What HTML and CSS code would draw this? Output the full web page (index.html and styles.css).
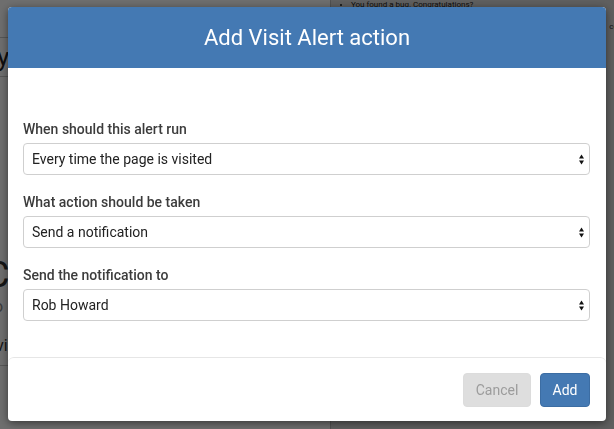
FILE: index.html
```html
<!DOCTYPE html>
<html>
<head>
<meta charset="utf-8">
<link rel="stylesheet" href="styles.css">
</head>
<body>
<div class="page">
  <div class="main">
    <div class="topbar"></div>
    <div class="heading">ry</div>
    <div class="spacer"></div>
    <div class="big">C</div>
    <div class="sub">o</div>
    <div class="line">vis</div>
  </div>
  <div class="side">
    <ul class="notes"><li>You found a bug. Congratulations?</li></ul>
    <div class="sidelink">co</div>
  </div>
</div>
<div class="overlay">
  <div class="modal">
    <div class="modal-header">Add Visit Alert action</div>
    <div class="modal-body">
      <div class="field">
        <label class="field-label">When should this alert run</label>
        <div class="select"><span>Every time the page is visited</span><svg class="arrows" width="5" height="11" viewBox="0 0 5 11"><path d="M2.5 0.5 L5 4.5 L0 4.5 Z M0 6.5 L5 6.5 L2.5 10.5 Z" fill="#111"/></svg></div>
      </div>
      <div class="field">
        <label class="field-label">What action should be taken</label>
        <div class="select"><span>Send a notification</span><svg class="arrows" width="5" height="11" viewBox="0 0 5 11"><path d="M2.5 0.5 L5 4.5 L0 4.5 Z M0 6.5 L5 6.5 L2.5 10.5 Z" fill="#111"/></svg></div>
      </div>
      <div class="field">
        <label class="field-label">Send the notification to</label>
        <div class="select"><span>Rob Howard</span><svg class="arrows" width="5" height="11" viewBox="0 0 5 11"><path d="M2.5 0.5 L5 4.5 L0 4.5 Z M0 6.5 L5 6.5 L2.5 10.5 Z" fill="#111"/></svg></div>
      </div>
    </div>
    <div class="modal-footer">
      <button class="btn btn-cancel">Cancel</button>
      <button class="btn btn-add">Add</button>
    </div>
  </div>
</div>
</body>
</html>
```

FILE: styles.css
```css
* { box-sizing: border-box; }
html, body { margin: 0; padding: 0; }
body {
  width: 614px;
  height: 429px;
  overflow: hidden;
  font-family: Roboto, "Liberation Sans", sans-serif;
  position: relative;
  background: #fff;
}
.page {
  display: flex;
  height: 429px;
}
.main {
  width: 330px;
  background: #fff;
  display: flex;
  flex-direction: column;
}
.topbar { height: 38px; border-bottom: 1px solid #c8c8c8; }
.heading {
  height: 39px;
  font-size: 26px;
  line-height: 39px;
  color: #222;
  border-bottom: 1px solid #c8c8c8;
  white-space: nowrap;
  margin-left: -12px;
}
.spacer { height: 178px; }
.big { font-size: 36px; color: #333; line-height: 40px; margin-left: -14px; }
.sub { font-size: 16px; color: #888; margin-left: -6px; margin-top: 2px; }
.line {
  margin-top: 20px;
  font-size: 16px;
  color: #333;
  padding-bottom: 10px;
  border-bottom: 1px solid #c8c8c8;
  margin-left: -4px;
}
.side {
  flex: 1;
  background: #dcdcdc;
  border-left: 1px solid #bbb;
  font-size: 8px;
  color: #222;
}
.notes { margin: 0; padding: 0 0 0 20px; line-height: 10px; }
.sidelink { text-align: right; margin-top: 12px; font-size: 8px; color: #333; margin-right: -4px; }
.overlay {
  position: fixed;
  inset: 0;
  background: rgba(0, 0, 0, 0.57);
  padding: 7px 8px 0 8px;
}
.modal {
  width: 598px;
  height: 414px;
  background: #fff;
  border-radius: 4px;
  box-shadow: 0 2px 8px rgba(0, 0, 0, 0.5);
  display: flex;
  flex-direction: column;
  overflow: hidden;
}
.modal-header {
  height: 61px;
  background: #4479b3;
  color: #fff;
  font-size: 22px;
  display: flex;
  align-items: center;
  justify-content: center;
  border-radius: 3px 3px 0 0;
}
.modal-body {
  flex: 1;
  padding: 51px 16px 0 15px;
  display: flex;
  flex-direction: column;
  gap: 17px;
}
.field { display: flex; flex-direction: column; }
.field-label {
  font-size: 14px;
  line-height: 20px;
  font-weight: 500;
  color: #3c3c3c;
  margin-bottom: 4px;
}
.select {
  height: 32px;
  border: 1px solid #cfcfcf;
  border-radius: 4px;
  display: flex;
  align-items: center;
  justify-content: space-between;
  padding: 0 5px 0 8px;
  font-size: 14px;
  color: #222;
}
.modal-footer {
  height: 64px;
  border-top: 1px solid #e6e6e6;
  border-radius: 6px 6px 0 0;
  display: flex;
  justify-content: flex-end;
  align-items: flex-start;
  gap: 9px;
  padding: 15px 16px 0 0;
}
.btn {
  height: 34px;
  border-radius: 4px;
  font-family: Roboto, "Liberation Sans", sans-serif;
  font-size: 14px;
  border: 1px solid transparent;
  padding: 0;
}
.btn-cancel {
  width: 68px;
  background: #dedede;
  color: #9c9c9c;
  border-color: #dcdcdc;
}
.btn-add {
  width: 50px;
  background: #4479b3;
  color: #fff;
  border-color: #3c6da3;
}
```
